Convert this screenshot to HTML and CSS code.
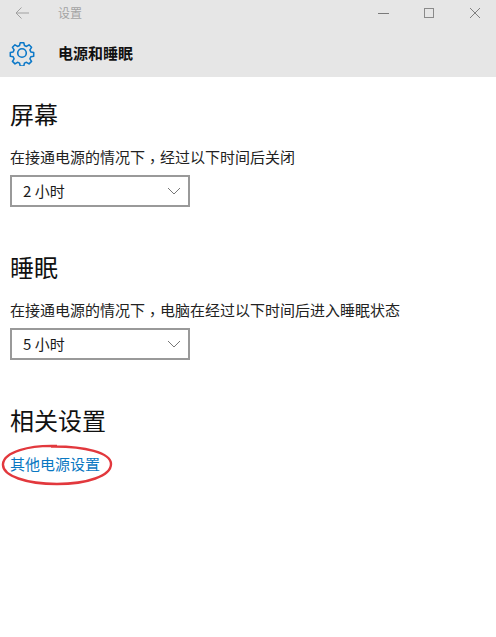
FILE: index.html
```html
<!DOCTYPE html>
<html lang="zh-CN">
<head>
<meta charset="utf-8">
<title>设置</title>
<link rel="stylesheet" href="styles.css">
</head>
<body>
<header class="header">
  <div class="titlebar">
    <svg class="back" width="16" height="14" viewBox="0 0 16 14"><path d="M15 7H2M7.500 1.500L2 7l5.500 5.500" fill="none" stroke="#a0a0a0" stroke-width="1"/></svg>
    <span class="apptitle">设置</span>
    <div class="winctrls">
      <svg width="12" height="12" viewBox="0 0 12 12"><path d="M1 6.500H12" stroke="#7a7a7a" fill="none"/></svg>
      <svg width="12" height="12" viewBox="0 0 12 12"><rect x="1.500" y="1.500" width="9" height="9" stroke="#8a8a8a" fill="none"/></svg>
      <svg width="12" height="12" viewBox="0 0 12 12"><path d="M1 1L11 11M11 1L1 11" stroke="#808080" fill="none"/></svg>
    </div>
  </div>
  <div class="pagehead">
    <svg class="gear" width="26" height="26" viewBox="0 0 26 26"><path d="M11 1.500h4l.7 3.200 2.300 1 2.800-1.800 2.800 2.800-1.800 2.800 1 2.300 3.200.7v4l-3.200.7-1 2.300 1.800 2.800-2.800 2.800-2.800-1.800-2.300 1-.7 3.200h-4l-.7-3.200-2.300-1-2.800 1.800-2.800-2.800 1.800-2.800-1-2.300-3.200-.7v-4l3.200-.7 1-2.300-1.800-2.800 2.800-2.800 2.800 1.800 2.300-1z" transform="translate(1.300 1.300) scale(.9)" fill="none" stroke="#0b78c8" stroke-width="1.700" stroke-linejoin="round"/><circle cx="13" cy="13" r="4.300" fill="none" stroke="#0b78c8" stroke-width="1.600"/></svg>
    <h1 class="pagetitle">电源和睡眠</h1>
  </div>
</header>
<main class="content">
  <section class="section">
    <h2 class="heading">屏幕</h2>
    <p class="label">在接通电源的情况下<span class="comma" lang="zh-TW">，</span>经过以下时间后关闭</p>
    <div class="select"><span class="value">2 小时</span><svg width="14" height="8" viewBox="0 0 14 8"><path d="M1 1l6 6 6-6" fill="none" stroke="#777" stroke-width="1"/></svg></div>
  </section>
  <section class="section">
    <h2 class="heading">睡眠</h2>
    <p class="label">在接通电源的情况下<span class="comma" lang="zh-TW">，</span>电脑在经过以下时间后进入睡眠状态</p>
    <div class="select"><span class="value">5 小时</span><svg width="14" height="8" viewBox="0 0 14 8"><path d="M1 1l6 6 6-6" fill="none" stroke="#777" stroke-width="1"/></svg></div>
  </section>
  <section class="section">
    <h2 class="heading">相关设置</h2>
    <div class="linkwrap">
      <a class="link" href="#">其他电源设置</a>
      <svg class="circle" width="112" height="42" viewBox="0 0 112 42"><path d="M56 2C28 1 3 8 2 20c-1 12 24 20 54 20s54-8 54-20C110 9 84 2 50 2.500" fill="none" stroke="#e2383d" stroke-width="2.400"/></svg>
    </div>
  </section>
</main>
</body>
</html>
```
FILE: styles.css
```css
html, body { margin: 0; padding: 0; }
body {
  width: 496px;
  height: 637px;
  overflow: hidden;
  background: #fff;
  font-family: "Noto Sans CJK SC", "Liberation Sans", sans-serif;
  color: #1a1a1a;
}
.header {
  height: 77px;
  background: #e6e6e6;
}
.titlebar {
  height: 25px;
  display: flex;
  align-items: center;
  padding-left: 14px;
}
.back { flex: none; }
.apptitle {
  margin-left: 28px;
  font-size: 12px;
  color: #a3a3a3;
}
.winctrls {
  margin-left: auto;
  display: flex;
  gap: 34px;
  padding-right: 15px;
}
.pagehead {
  height: 52px;
  display: flex;
  align-items: center;
  padding-left: 9px;
  padding-top: 3px;
  box-sizing: border-box;
}
.gear { flex: none; }
.pagetitle {
  margin: 0 0 0 23px;
  font-size: 15px;
  line-height: 20px;
  font-weight: 700;
  color: #111;
}
.content { padding-left: 10px; }
.section {
  height: 153px;
  padding-top: 21px;
  box-sizing: border-box;
}
.heading {
  margin: 0;
  font-size: 24px;
  line-height: 32px;
  font-weight: 400;
  color: #111;
}
.label {
  margin: 17px 0 0;
  font-size: 15px;
  line-height: 20px;
  color: #222;
}
.comma {
  font-family: "Noto Sans CJK TC", sans-serif;
  line-height: 10px;
  vertical-align: -4px;
}
.select {
  margin-top: 8px;
  width: 180px;
  height: 32px;
  box-sizing: border-box;
  border: 2px solid #999;
  display: flex;
  align-items: center;
  justify-content: space-between;
  padding: 0 7px 0 11px;
  font-size: 15px;
}
.value { margin-top: -2px; }
.linkwrap {
  position: relative;
  margin-top: 18px;
  height: 20px;
}
.link {
  font-size: 15px;
  line-height: 20px;
  color: #0a78c2;
  text-decoration: none;
  display: block;
}
.circle {
  position: absolute;
  left: -9px;
  top: -10px;
}
```
